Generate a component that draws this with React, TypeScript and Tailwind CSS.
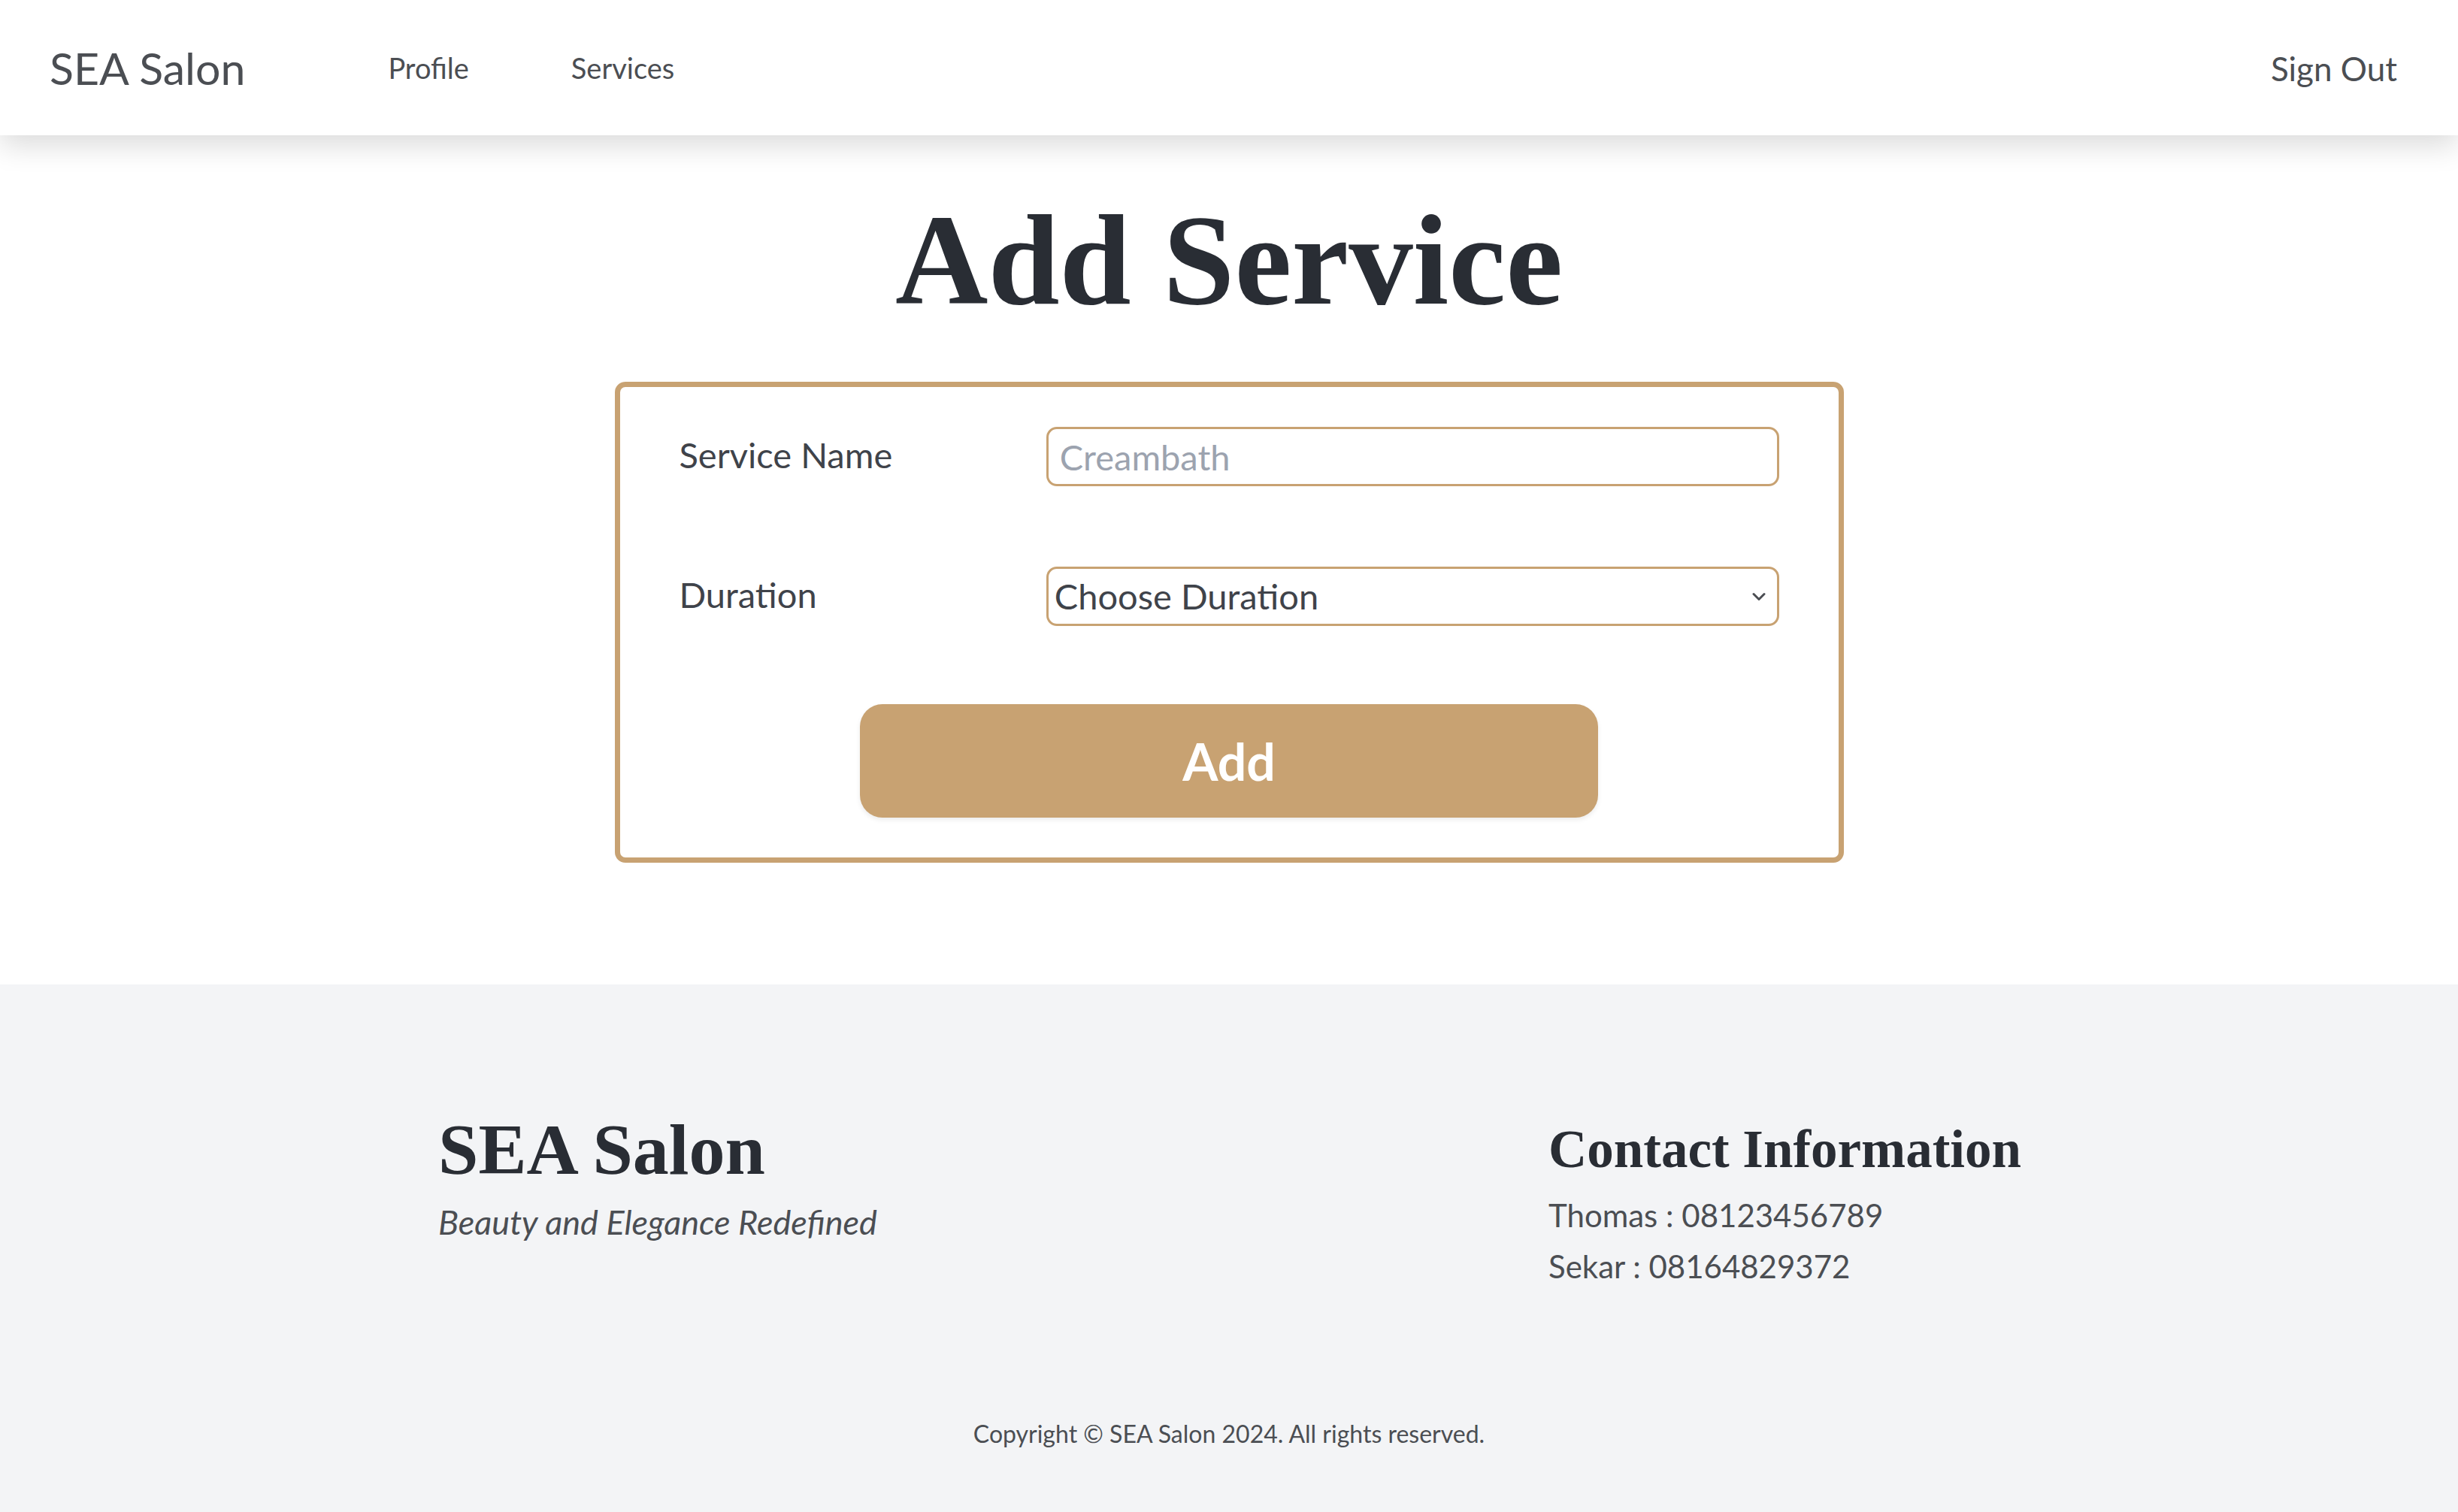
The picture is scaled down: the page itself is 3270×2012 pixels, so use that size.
import React from "react";

const sans = "font-['Lato','Noto_Sans',sans-serif]";
const serif = "font-['Liberation_Serif','DejaVu_Serif',serif]";

export default function App() {
  return (
    <div className={`min-h-screen w-full bg-white ${sans}`}>
      {/* Navbar */}
      <nav className="relative z-10 flex h-[180px] items-center justify-between bg-white pl-[66px] pr-[81px] shadow-[0_14px_36px_rgba(0,0,0,0.14)]">
        <div className="flex items-center">
          <span className="text-[59px] leading-none text-[#4b4e53]">SEA Salon</span>
          <a className="ml-[190px] text-[38px] leading-none text-[#4b4e53]">Profile</a>
          <a className="ml-[136px] text-[38px] leading-none text-[#4b4e53]">Services</a>
        </div>
        <button className="mt-[2px] text-[44px] leading-none text-[#4b4e53]">Sign Out</button>
      </nav>

      {/* Main */}
      <main className="flex h-[1130px] flex-col items-center">
        <h1 className={`${serif} mt-[81px] text-[171px] font-bold leading-none text-[#292d34]`}>
          Add Service
        </h1>
        <form className="mt-[76px] w-[1635px] rounded-[14px] border-[7px] border-[#c8a272] px-[79px] pb-[53px] pt-[53px]">
          <div className="flex items-center">
            <label className="w-[489px] text-[47px] leading-none text-[#3f434a] -mt-[4px]">Service Name</label>
            <input
              className="h-[79px] w-[976px] rounded-[14px] border-[3px] border-[#c8a272] px-[15px] text-[47px] text-[#3f434a] outline-none placeholder:text-[#9ca3af]"
              placeholder="Creambath"
            />
          </div>
          <div className="mt-[107px] flex items-center">
            <label className="w-[489px] text-[47px] leading-none text-[#3f434a] -mt-[4px]">Duration</label>
            <div className="relative h-[79px] w-[976px]">
              <select className="h-full w-full appearance-none rounded-[14px] border-[3px] border-[#c8a272] bg-white px-[8px] text-[47px] text-[#3f434a] outline-none">
                <option>Choose Duration</option>
                <option>1 Hour</option>
                <option>2 Hours</option>
              </select>
              <svg
                className="pointer-events-none absolute right-[18px] top-1/2 -translate-y-1/2"
                width="18"
                height="12"
                viewBox="0 0 18 12"
                fill="none"
              >
                <path d="M2 2.5 L9 9.5 L16 2.5" stroke="#4b4e53" strokeWidth="3" strokeLinecap="round" strokeLinejoin="round" />
              </svg>
            </div>
          </div>
          <div className="mt-[104px] flex justify-center">
            <button
              type="button"
              className="h-[151px] w-[982px] rounded-[30px] bg-[#c8a272] text-[68px] font-bold leading-none text-white shadow-[0_3px_6px_rgba(0,0,0,0.08)]"
            >
              Add
            </button>
          </div>
        </form>
      </main>

      {/* Footer */}
      <footer className="flex h-[702px] flex-col bg-[#f3f4f6] pt-[172px]">
        <div className="flex items-start pl-[583px]">
          <div className="w-[1477px]">
            <h2 className={`${serif} text-[96px] font-bold leading-none text-[#292d34]`}>SEA Salon</h2>
            <p className="mt-[26px] text-[45px] italic leading-none text-[#4b4e53]">
              Beauty and Elegance Redefined
            </p>
          </div>
          <div className="mt-[12px]">
            <h3 className={`${serif} text-[71px] font-bold leading-none text-[#292d34]`}>
              Contact Information
            </h3>
            <p className="mt-[18px] text-[42px] leading-[68px] text-[#4b4e53]">Thomas : 08123456789</p>
            <p className="text-[42px] leading-[68px] text-[#4b4e53]">Sekar : 08164829372</p>
          </div>
        </div>
        <p className="mt-[173px] text-center text-[32px] leading-none text-[#4b4e53]">
          Copyright © SEA Salon 2024. All rights reserved.
        </p>
      </footer>
    </div>
  );
}
